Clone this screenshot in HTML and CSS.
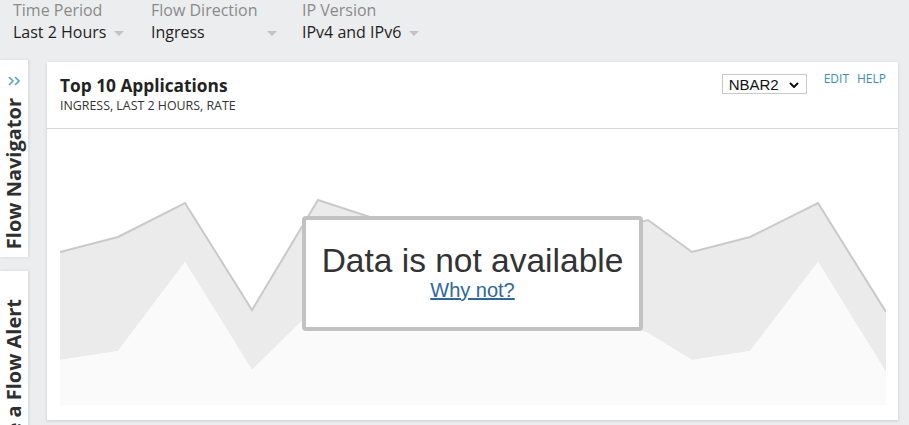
FILE: index.html
```html
<!DOCTYPE html>
<html>
<head>
<meta charset="utf-8">
<link rel="stylesheet" href="styles.css">
</head>
<body>
<div class="topbar">
  <div class="filter f1">
    <div class="flabel">Time Period</div>
    <div class="fvalue"><span>Last 2 Hours</span><i class="caret"></i></div>
  </div>
  <div class="filter f2">
    <div class="flabel">Flow Direction</div>
    <div class="fvalue"><span>Ingress</span><i class="caret"></i></div>
  </div>
  <div class="filter f3">
    <div class="flabel">IP Version</div>
    <div class="fvalue"><span>IPv4 and IPv6</span><i class="caret"></i></div>
  </div>
</div>
<div class="main">
  <div class="sidebar">
    <div class="tab tab1">
      <svg class="chev" width="13" height="10" viewBox="0 0 13 10"><path d="M1 1 L5 5 L1 9 M7 1 L11 5 L7 9" fill="none" stroke="#5d9ec2" stroke-width="1.6"/></svg>
      <div class="vtext">Flow Navigator</div>
    </div>
    <div class="tab tab2">
      <svg class="chev" width="13" height="10" viewBox="0 0 13 10"><path d="M1 1 L5 5 L1 9 M7 1 L11 5 L7 9" fill="none" stroke="#5d9ec2" stroke-width="1.6"/></svg>
      <div class="vtext">Create a Flow Alert</div>
    </div>
  </div>
  <div class="card">
    <div class="card-head">
      <div class="titles">
        <div class="title">Top 10 Applications</div>
        <div class="subtitle">INGRESS, LAST 2 HOURS, RATE</div>
      </div>
      <div class="select"><span>NBAR2</span><svg width="10" height="6" viewBox="0 0 10 6"><path d="M1 1 L5 5 L9 1" fill="none" stroke="#111" stroke-width="2"/></svg></div>
      <div class="links"><a href="#">EDIT</a><a href="#">HELP</a></div>
    </div>
    <div class="card-body">
      <svg class="chart" width="826" height="276" viewBox="0 0 826 276">
        <polygon fill="#ebebeb" points="0,123 58,108 125,74 192,181 258,71 325,93 392,101 458,96 525,106 588,91 632,123 690,108 758,74 826,183 826,243 758,133 690,222 632,231 588,204 525,181 458,171 392,161 325,171 258,176 192,241 125,133 58,222 0,231"/>
        <polygon fill="#fafafa" points="0,231 58,222 125,133 192,241 258,176 325,171 392,161 458,171 525,181 588,204 632,231 690,222 758,133 826,243 826,276 0,276"/>
        <polyline fill="none" stroke="#c9c9c9" stroke-width="2" points="0,123 58,108 125,74 192,181 258,71 325,93 392,101 458,96 525,106 588,91 632,123 690,108 758,74 826,183"/>
      </svg>
      <div class="nodata">
        <div class="nd-text">Data is not available</div>
        <a class="nd-link" href="#">Why not?</a>
      </div>
    </div>
  </div>
</div>
</body>
</html>
```
FILE: styles.css
```css
html, body {
  margin: 0;
  padding: 0;
  height: 425px;
  overflow: hidden;
}
body {
  background: #ecedee;
  font-family: "Open Sans", "Noto Sans", sans-serif;
  color: #222;
}
.topbar {
  display: flex;
  height: 60px;
  padding-left: 13px;
  box-sizing: border-box;
}
.filter {
  display: flex;
  flex-direction: column;
  gap: 2px;
}
.f1 { width: 138px; }
.f2 { width: 151px; }
.flabel {
  font-size: 16px;
  line-height: 20px;
  color: #8a8a8a;
}
.fvalue {
  display: flex;
  align-items: center;
  font-size: 16px;
  line-height: 20px;
  color: #1f1f1f;
}
.f2 .fvalue {
  width: 126px;
  justify-content: space-between;
}
.caret {
  display: block;
  width: 0;
  height: 0;
  border-left: 5.5px solid transparent;
  border-right: 5.5px solid transparent;
  border-top: 5px solid #c3c3c3;
  margin-left: 8px;
  margin-top: 2px;
}
.main {
  display: flex;
  align-items: flex-start;
}
.sidebar {
  width: 28px;
  display: flex;
  flex-direction: column;
  gap: 14px;
}
.tab {
  background: #fff;
  box-shadow: 1px 0 3px rgba(0,0,0,0.10);
  display: flex;
  flex-direction: column;
  align-items: center;
  padding-top: 16px;
  box-sizing: border-box;
}
.tab1 { height: 197px; }
.tab2 { height: 200px; }
.chev { display: block; }
.vtext {
  writing-mode: vertical-rl;
  transform: rotate(180deg);
  font-weight: 700;
  font-size: 20px;
  line-height: 26px;
  color: #2f2f2f;
  margin-top: 12px;
  white-space: nowrap;
}
.card {
  margin-left: 19px;
  margin-top: 2px;
  width: 851px;
  height: 358px;
  background: #fff;
  box-shadow: 0 1px 3px rgba(0,0,0,0.14);
}
.card-head {
  display: flex;
  align-items: flex-start;
  height: 67px;
  box-sizing: border-box;
  padding: 12px 12px 0 13px;
  border-bottom: 1px solid #d7d7d7;
}
.titles {
  flex: 1;
  margin-top: 1px;
}
.title {
  font-size: 17.3px;
  font-weight: 700;
  line-height: 22px;
  color: #222;
}
.subtitle {
  font-size: 12.4px;
  line-height: 17px;
  color: #333;
}
.select {
  width: 85px;
  height: 20px;
  box-sizing: border-box;
  border: 1px solid #c8c8c8;
  display: flex;
  align-items: center;
  justify-content: space-between;
  padding: 0 7px 0 6px;
  font-family: "Liberation Sans", Arial, sans-serif;
  font-size: 15px;
  color: #111;
}
.select svg { display: block; margin-top: 1px; }
.links {
  display: flex;
  gap: 8px;
  margin-left: 17px;
  margin-top: -3px;
}
.links a {
  font-size: 12px;
  line-height: 16px;
  color: #3d8db5;
  text-decoration: none;
}
.card-body {
  position: relative;
  padding: 0 12px 15px 13px;
}
.chart { display: block; }
.nodata {
  position: absolute;
  top: 87px;
  left: 255px;
  width: 341px;
  height: 115px;
  box-sizing: border-box;
  border: 4px solid #c2c2c2;
  border-radius: 4px;
  background: #fff;
  text-align: center;
  padding-top: 22px;
  font-family: "Liberation Sans", Arial, sans-serif;
}
.nd-text {
  font-size: 33.5px;
  line-height: 37px;
  color: #333;
}
.nd-link {
  font-size: 20px;
  line-height: 23px;
  color: #2d67a0;
  text-decoration: underline;
}
```
